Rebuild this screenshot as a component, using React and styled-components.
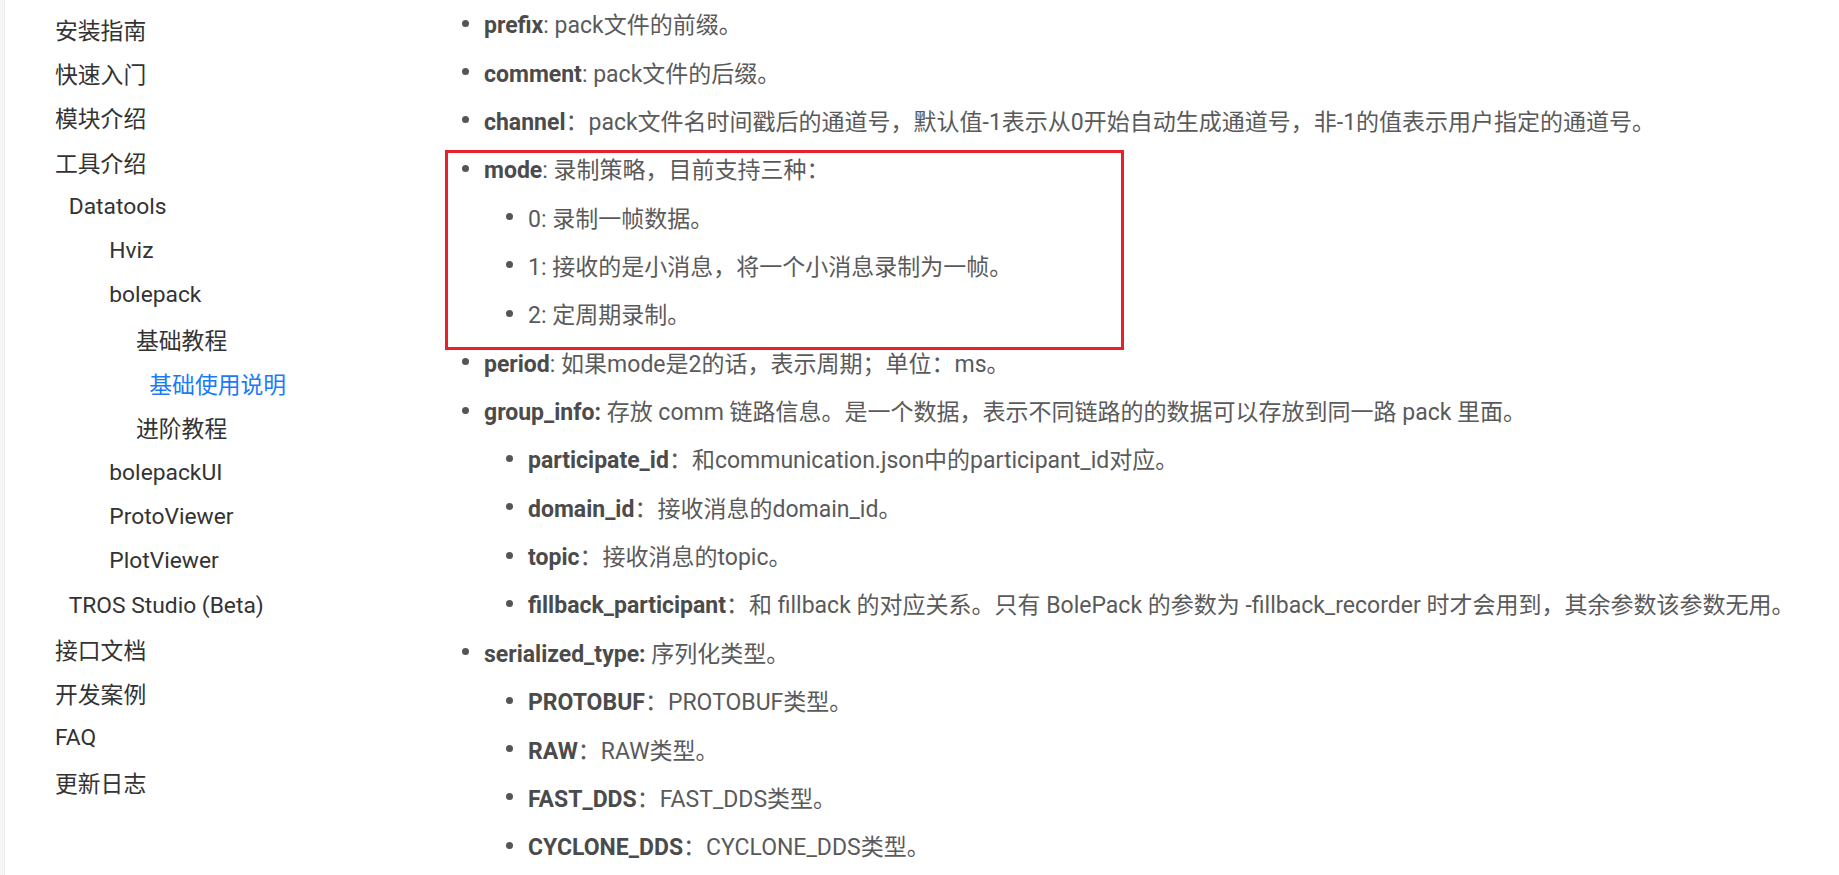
import React from 'react';
import styled, { createGlobalStyle } from 'styled-components';

const Global = createGlobalStyle`
  html, body { margin: 0; padding: 0; background: #fff; }
  body {
    font-family: Roboto, "Noto Sans CJK SC", sans-serif;
    overflow: hidden;
  }
`;

const Page = styled.div`
  display: flex;
  width: 1839px;
  height: 875px;
  overflow: hidden;
`;

const Rail = styled.div`
  flex: none;
  width: 4px;
  background: #f5f5f5;
  border-right: 1px solid #ebebeb;
`;

const Sidebar = styled.nav`
  flex: none;
  width: 435px;
  padding-top: 7px;
  display: flex;
  flex-direction: column;
`;

const NavItem = styled.a`
  display: flex;
  align-items: center;
  height: 44.3px;
  padding-left: ${(p) => p.$indent}px;
  font-size: 22.8px;
  color: ${(p) => (p.$active ? '#1a7af8' : '#333333')};
  text-decoration: none;
  white-space: nowrap;
`;

const Main = styled.main`
  flex: 1;
  padding-left: 21.5px;
  margin-top: -1px;
`;

const List = styled.ul`
  list-style: none;
  margin: 0;
  padding: 0 0 0 ${(p) => (p.$nested ? 44 : 0)}px;
`;

const Item = styled.li`
  position: relative;
`;

const Row = styled.div`
  display: flex;
  align-items: center;
  height: 48.36px;
  white-space: nowrap;
  font-size: 23px;
  color: #5a5a5a;
`;

const Bullet = styled.span`
  flex: none;
  width: 7px;
  height: 7px;
  border-radius: 50%;
  background: #555555;
  margin-right: 15.5px;
`;

const Key = styled.strong`
  font-weight: 700;
  color: #4b4b4b;
`;

const Frame = styled.div`
  position: absolute;
  top: 5.5px;
  left: -16.5px;
  width: 679px;
  height: 200px;
  box-sizing: border-box;
  border: 3px solid #e8202a;
  pointer-events: none;
`;

const nav = [
  { t: '安装指南', x: 55 },
  { t: '快速入门', x: 55 },
  { t: '模块介绍', x: 55 },
  { t: '工具介绍', x: 55 },
  { t: 'Datatools', x: 68.7 },
  { t: 'Hviz', x: 109.3 },
  { t: 'bolepack', x: 109.3 },
  { t: '基础教程', x: 136 },
  { t: '基础使用说明', x: 149.3, active: true },
  { t: '进阶教程', x: 136 },
  { t: 'bolepackUI', x: 109.3 },
  { t: 'ProtoViewer', x: 109.3 },
  { t: 'PlotViewer', x: 109.3 },
  { t: 'TROS Studio (Beta)', x: 68.7 },
  { t: '接口文档', x: 55 },
  { t: '开发案例', x: 55 },
  { t: 'FAQ', x: 55 },
  { t: '更新日志', x: 55 },
];

const Line = ({ k, children }) => (
  <Row>
    <Bullet />
    <span>
      {k && <Key>{k}</Key>}
      {children}
    </span>
  </Row>
);

export default function App() {
  return (
    <>
      <Global />
      <Page>
        <Rail />
        <Sidebar>
          {nav.map((n) => (
            <NavItem key={n.t} $indent={n.x - 5} $active={n.active}>
              {n.t}
            </NavItem>
          ))}
        </Sidebar>
        <Main>
          <List>
            <Item><Line k="prefix">: pack文件的前缀。</Line></Item>
            <Item><Line k="comment">: pack文件的后缀。</Line></Item>
            <Item><Line k="channel">：pack文件名时间戳后的通道号，默认值-1表示从0开始自动生成通道号，非-1的值表示用户指定的通道号。</Line></Item>
            <Item>
              <Frame />
              <Line k="mode">: 录制策略，目前支持三种：</Line>
              <List $nested>
                <Item><Line>0: 录制一帧数据。</Line></Item>
                <Item><Line>1: 接收的是小消息，将一个小消息录制为一帧。</Line></Item>
                <Item><Line>2: 定周期录制。</Line></Item>
              </List>
            </Item>
            <Item><Line k="period">: 如果mode是2的话，表示周期；单位：ms。</Line></Item>
            <Item>
              <Line k="group_info:"> 存放 comm 链路信息。是一个数据，表示不同链路的的数据可以存放到同一路 pack 里面。</Line>
              <List $nested>
                <Item><Line k="participate_id">：和communication.json中的participant_id对应。</Line></Item>
                <Item><Line k="domain_id">：接收消息的domain_id。</Line></Item>
                <Item><Line k="topic">：接收消息的topic。</Line></Item>
                <Item><Line k="fillback_participant">：和 fillback 的对应关系。只有 BolePack 的参数为 -fillback_recorder 时才会用到，其余参数该参数无用。</Line></Item>
              </List>
            </Item>
            <Item>
              <Line k="serialized_type:"> 序列化类型。</Line>
              <List $nested>
                <Item><Line k="PROTOBUF">：PROTOBUF类型。</Line></Item>
                <Item><Line k="RAW">：RAW类型。</Line></Item>
                <Item><Line k="FAST_DDS">：FAST_DDS类型。</Line></Item>
                <Item><Line k="CYCLONE_DDS">：CYCLONE_DDS类型。</Line></Item>
              </List>
            </Item>
          </List>
        </Main>
      </Page>
    </>
  );
}
